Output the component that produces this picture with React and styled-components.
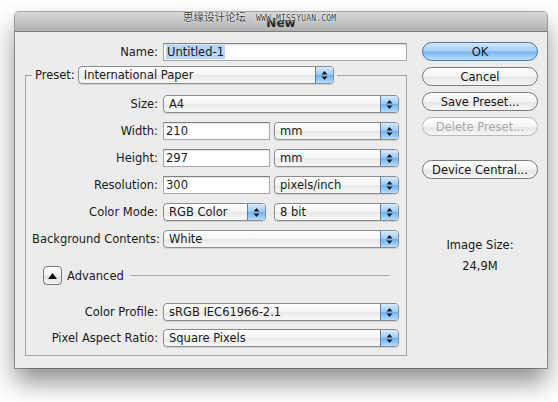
import styled, { createGlobalStyle } from "styled-components";

const GlobalStyle = createGlobalStyle`
  body {
    margin: 0;
    background: #ffffff;
    font-family: "DejaVu Sans", "Liberation Sans", sans-serif;
    font-size: 11.5px;
    color: #1a1a1a;
  }
`;

const Page = styled.div`
  height: 402px;
  box-sizing: border-box;
  padding: 12px 0 0 15px;
  overflow: hidden;
`;

const Window = styled.div`
  width: 532px;
  height: 356px;
  box-sizing: border-box;
  background: #ececec;
  border-radius: 4px 4px 0 0;
  box-shadow: 0 0 0 1px rgba(0, 0, 0, 0.32), 0 14px 26px rgba(0, 0, 0, 0.45);
  display: flex;
  flex-direction: column;
`;

const TitleBar = styled.div`
  position: relative;
  height: 19px;
  flex: none;
  border-radius: 4px 4px 0 0;
  border-bottom: 1px solid #7e7e7e;
  background: linear-gradient(#d8d8d8, #b2b2b2);
  display: flex;
  align-items: center;
  justify-content: center;
`;

const Title = styled.span`
  font-size: 12px;
  font-weight: bold;
  color: #262626;
  padding-top: 3px;
`;

const Watermark = styled.div`
  position: absolute;
  left: 168px;
  top: -3px;
  display: flex;
  align-items: center;
  gap: 10px;
  color: #3a3a3a;
  text-shadow: 0 0 2px #fff, 0 0 1px #fff;
  pointer-events: none;
`;

const WatermarkCn = styled.span`
  font-family: "Noto Sans CJK SC", sans-serif;
  font-size: 10.5px;
`;

const WatermarkUrl = styled.span`
  font-family: "DejaVu Sans Mono", monospace;
  font-size: 8px;
  letter-spacing: 0.2px;
  margin-top: 3px;
`;

const Body = styled.div`
  display: flex;
  gap: 15px;
  padding: 10px 9px 0 10px;
`;

const LeftCol = styled.div`
  width: 382px;
  display: flex;
  flex-direction: column;
`;

const Row = styled.div`
  display: flex;
  align-items: center;
  gap: 5px;
  height: 18px;
  margin-top: ${(p) => p.$top ?? 0}px;
`;

const Label = styled.span`
  width: ${(p) => p.$w}px;
  flex: none;
  text-align: right;
  white-space: nowrap;
`;

const Input = styled.div`
  width: ${(p) => p.$w}px;
  height: 18px;
  box-sizing: border-box;
  flex: none;
  background: #fff;
  border: 1px solid #a8a8a8;
  border-top-color: #828282;
  box-shadow: inset 0 1px 1px rgba(0, 0, 0, 0.12);
  padding-left: 2px;
  display: flex;
  align-items: center;
  white-space: nowrap;
`;

const Selected = styled.span`
  background: #b5d5fd;
  padding: 0 1px;
  line-height: 14px;
`;

const Popup = styled.div`
  width: ${(p) => p.$w}px;
  height: 18px;
  box-sizing: border-box;
  flex: none;
  margin-left: ${(p) => p.$ml ?? 0}px;
  display: flex;
  border: 1px solid #8c8c8c;
  border-radius: 4px;
  background: linear-gradient(#ffffff, #f4f4f4 50%, #e9e9e9 51%, #f8f8f8);
  box-shadow: 0 1px 1px rgba(0, 0, 0, 0.12);
  overflow: hidden;
`;

const PopupValue = styled.span`
  flex: 1;
  padding-left: 5px;
  display: flex;
  align-items: center;
  white-space: nowrap;
`;

const Stepper = styled.span`
  width: 17px;
  flex: none;
  border-left: 1px solid #5c7ea9;
  background: linear-gradient(#d6eafc, #9ccbf4 48%, #72b2ef 52%, #b5dcfb);
  display: flex;
  align-items: center;
  justify-content: center;
`;

const Group = styled.fieldset`
  margin: 5px 0 0;
  padding: 0 7px 8px 6px;
  border: 1px solid #a3a3a3;
  min-width: 0;
`;

const Legend = styled.legend`
  padding: 0 3px;
  display: flex;
  align-items: center;
  gap: 3px;
`;

const GroupRows = styled.div`
  margin-top: ${(p) => p.$top ?? 0}px;
  display: flex;
  flex-direction: column;
  gap: ${(p) => p.$gap ?? 9}px;
`;

const AdvancedRow = styled.div`
  display: flex;
  align-items: center;
  height: 19px;
  margin: 18px 0 18px;
  padding-left: 11px;
`;

const Disclosure = styled.span`
  width: 19px;
  height: 19px;
  box-sizing: border-box;
  flex: none;
  border: 1px solid #7a7a7a;
  border-radius: 4px;
  background: linear-gradient(#ffffff, #f0f0f0 50%, #e2e2e2 51%, #f3f3f3);
  display: flex;
  align-items: center;
  justify-content: center;
`;

const AdvancedText = styled.span`
  margin-left: 5px;
`;

const Rule = styled.span`
  flex: 1;
  height: 1px;
  background: #acacac;
  margin: 0 9px 0 6px;
`;

const RightCol = styled.div`
  width: 116px;
  display: flex;
  flex-direction: column;
  gap: 6px;
`;

const Button = styled.div`
  height: 19px;
  box-sizing: border-box;
  border-radius: 10px;
  margin-top: ${(p) => p.$top ?? 0}px;
  border: 1px solid ${(p) => (p.$default ? "#4f74a4" : p.$disabled ? "#b9b9b9" : "#7a7a7a")};
  background: ${(p) =>
    p.$default
      ? "linear-gradient(#d4e9fc, #a2cdf5 48%, #75b4ee 52%, #bde0fc)"
      : "linear-gradient(#ffffff, #f4f4f4 50%, #e6e6e6 51%, #f6f6f6)"};
  color: ${(p) => (p.$disabled ? "#a9a9a9" : "#161616")};
  display: flex;
  align-items: center;
  justify-content: center;
  white-space: nowrap;
`;

const Info = styled.div`
  margin-top: 50px;
  text-align: center;
  line-height: 21px;
`;

const Arrows = () => (
  <svg width="7" height="11" viewBox="0 0 7 11">
    <polygon points="3.5,1 6.5,4.5 0.5,4.5" fill="#1b1b1b" />
    <polygon points="0.5,6.5 6.5,6.5 3.5,10" fill="#1b1b1b" />
  </svg>
);

const Select = ({ w, ml, children }) => (
  <Popup $w={w} $ml={ml}>
    <PopupValue>{children}</PopupValue>
    <Stepper>
      <Arrows />
    </Stepper>
  </Popup>
);

const LW = 126;

export default function App() {
  return (
    <Page>
      <GlobalStyle />
      <Window>
        <TitleBar>
          <Title>New</Title>
          <Watermark>
            <WatermarkCn>思缘设计论坛</WatermarkCn>
            <WatermarkUrl>WWW.MISSYUAN.COM</WatermarkUrl>
          </Watermark>
        </TitleBar>
        <Body>
          <LeftCol>
            <Row $top={1}>
              <Label $w={133}>Name:</Label>
              <Input $w={244}>
                <Selected>Untitled-1</Selected>
              </Input>
            </Row>
            <Group>
              <Legend>
                <span>Preset:</span>
                <Select w={256}>International Paper</Select>
              </Legend>
              <GroupRows $top={11}>
                <Row>
                  <Label $w={LW}>Size:</Label>
                  <Select w={236}>A4</Select>
                </Row>
                <Row>
                  <Label $w={LW}>Width:</Label>
                  <Input $w={107}>210</Input>
                  <Select w={125} ml={-1}>mm</Select>
                </Row>
                <Row>
                  <Label $w={LW}>Height:</Label>
                  <Input $w={107}>297</Input>
                  <Select w={125} ml={-1}>mm</Select>
                </Row>
                <Row>
                  <Label $w={LW}>Resolution:</Label>
                  <Input $w={107}>300</Input>
                  <Select w={125} ml={-1}>pixels/inch</Select>
                </Row>
                <Row>
                  <Label $w={LW}>Color Mode:</Label>
                  <Select w={103}>RGB Color</Select>
                  <Select w={125} ml={3}>8 bit</Select>
                </Row>
                <Row>
                  <Label $w={LW}>Background Contents:</Label>
                  <Select w={236}>White</Select>
                </Row>
              </GroupRows>
              <AdvancedRow>
                <Disclosure>
                  <svg width="9" height="6" viewBox="0 0 9 6">
                    <polygon points="4.5,0 9,6 0,6" fill="#111" />
                  </svg>
                </Disclosure>
                <AdvancedText>Advanced</AdvancedText>
                <Rule />
              </AdvancedRow>
              <GroupRows $gap={8}>
                <Row>
                  <Label $w={LW}>Color Profile:</Label>
                  <Select w={236}>sRGB IEC61966-2.1</Select>
                </Row>
                <Row>
                  <Label $w={LW}>Pixel Aspect Ratio:</Label>
                  <Select w={236}>Square Pixels</Select>
                </Row>
              </GroupRows>
            </Group>
          </LeftCol>
          <RightCol>
            <Button $default>OK</Button>
            <Button>Cancel</Button>
            <Button>Save Preset...</Button>
            <Button $disabled>Delete Preset...</Button>
            <Button $top={18}>Device Central...</Button>
            <Info>
              <div>Image Size:</div>
              <div>24,9M</div>
            </Info>
          </RightCol>
        </Body>
      </Window>
    </Page>
  );
}
